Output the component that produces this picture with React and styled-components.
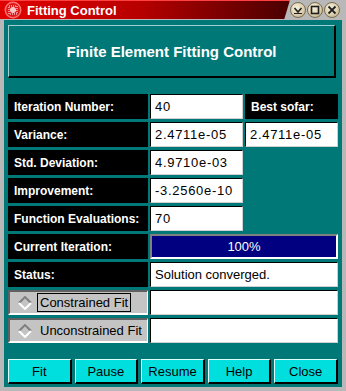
import React from 'react';
import styled, { createGlobalStyle } from 'styled-components';

const GlobalStyle = createGlobalStyle`
  html, body {
    margin: 0;
    padding: 0;
    background: #b8b8b8;
  }
  body {
    font-family: "Liberation Sans", Arial, sans-serif;
  }
`;

const Window = styled.div`
  width: 346px;
  height: 391px;
  display: flex;
  flex-direction: column;
  background: #b8b8b8;
  overflow: hidden;
`;

const TitleBar = styled.div`
  position: relative;
  height: 19px;
  flex: none;
  display: flex;
  align-items: center;
  background: linear-gradient(90deg, #e00000 0%, #b80000 40%, #600000 75%, #200000 100%);
  border-top: 1px solid #ff4040;
  box-sizing: border-box;
`;

const TitleText = styled.span`
  color: #fff;
  font-weight: bold;
  font-size: 13px;
  margin-left: 5px;
`;

const TitleIcon = styled.svg`
  margin-left: 4px;
  flex: none;
`;

const ControlArea = styled.div`
  position: absolute;
  right: 0;
  top: -1px;
  height: 20px;
  width: 62px;
  background: #b8b8b8;
  clip-path: polygon(6px 0, 100% 0, 100% 100%, 0 100%);
  display: flex;
  align-items: center;
  justify-content: flex-end;
  gap: 1px;
  padding-right: 6px;
  box-sizing: border-box;
`;

const CircleButton = styled.div`
  width: 16px;
  height: 16px;
  box-sizing: border-box;
  border-radius: 50%;
  border: 1px solid #7a6c50;
  background: radial-gradient(circle at 40% 35%, #f8f0dc 0%, #dccfae 55%, #b0a07c 100%);
  display: flex;
  align-items: center;
  justify-content: center;
`;

const Body = styled.div`
  flex: 1;
  margin: 1px 4px 4px 4px;
  background: #007878;
  padding: 5px 4px 3px 4px;
  display: flex;
  flex-direction: column;
`;

const Header = styled.div`
  height: 53px;
  margin-right: 2px;
  box-sizing: border-box;
  border-top: 1px solid #a0d0d0;
  border-left: 1px solid #a0d0d0;
  border-bottom: 2px solid #000;
  border-right: 2px solid #000;
  display: flex;
  align-items: center;
  justify-content: center;
  color: #fff;
  font-weight: bold;
  font-size: 15px;
`;

const Grid = styled.div`
  margin-top: 16px;
  display: grid;
  grid-template-columns: 140px 93px 93px;
  grid-auto-rows: 25px;
  column-gap: 2px;
  row-gap: 3px;
`;

const Label = styled.div`
  background: #000;
  color: #fff;
  font-weight: bold;
  font-size: 12px;
  display: flex;
  align-items: center;
  padding-left: 6px;
  grid-column: ${p => p.$col || 'auto'};
`;

const Entry = styled.div`
  background: #fff;
  color: #000;
  font-size: 13px;
  letter-spacing: ${p => (p.$num ? '0.7px' : '0')};
  display: flex;
  align-items: center;
  padding-left: 4px;
  box-sizing: border-box;
  border-top: 1px solid #000;
  border-left: 1px solid #000;
  border-bottom: 1px solid #d0d0d0;
  border-right: 1px solid #d0d0d0;
  grid-column: ${p => (p.$wide ? 'span 2' : 'auto')};
`;

const Progress = styled.div`
  grid-column: span 2;
  background: #000080;
  color: #fff;
  font-size: 13px;
  display: flex;
  align-items: center;
  justify-content: center;
  box-sizing: border-box;
  border-top: 2px solid #808080;
  border-left: 2px solid #808080;
  border-bottom: 2px solid #fff;
  border-right: 2px solid #fff;
`;

const RadioCell = styled.div`
  background: #c4c4c4;
  display: flex;
  align-items: center;
  gap: 5px;
  padding-left: 8px;
  box-sizing: border-box;
  white-space: nowrap;
  overflow: hidden;
  border-top: 2px solid #606060;
  border-left: 2px solid #606060;
  border-bottom: 2px solid #fff;
  border-right: 1px solid #fff;
`;

const RadioText = styled.span`
  font-size: 13px;
  color: #000;
  padding: 1px 2px;
  border: 1px solid ${p => (p.$focus ? '#000' : 'transparent')};
`;

const Buttons = styled.div`
  margin-top: 16px;
  display: grid;
  grid-template-columns: repeat(5, 1fr);
  column-gap: 3px;
  height: 25px;
`;

const Button = styled.button`
  background: #00dede;
  color: #000;
  font-family: "Liberation Sans", Arial, sans-serif;
  font-size: 13px;
  padding: 0;
  box-sizing: border-box;
  border-top: 1px solid #e0ffff;
  border-left: 1px solid #e0ffff;
  border-bottom: 2px solid #000;
  border-right: 2px solid #000;
`;

const Diamond = () => (
  <svg width="14" height="14" viewBox="0 0 14 14" style={{ flex: 'none' }}>
    <polygon points="7,1 13,7 7,13 1,7" fill="#c4c4c4" />
    <polyline points="1,7 7,1 13,7" fill="none" stroke="#808080" strokeWidth="2" />
    <polyline points="1,7 7,13 13,7" fill="none" stroke="#ffffff" strokeWidth="2" />
  </svg>
);

const rows = [
  ['Iteration Number:', '40'],
  ['Variance:', '2.4711e-05'],
  ['Std. Deviation:', '4.9710e-03'],
  ['Improvement:', '-3.2560e-10'],
  ['Function Evaluations:', '70'],
];

export default function App() {
  return (
    <Window>
      <GlobalStyle />
      <TitleBar>
        <TitleIcon width="18" height="18" viewBox="0 0 18 18">
          <circle cx="9" cy="9" r="8.5" fill="#ff7070" />
          <circle cx="9" cy="9" r="7" fill="#e01818" />
          <rect x="5" y="5" width="8" height="8" fill="none" stroke="#fff" strokeDasharray="1 1" />
          <path d="M7 7h4v4h-4z M9 6v6 M6 9h6" stroke="#fff" strokeWidth="1" fill="none" />
        </TitleIcon>
        <TitleText>Fitting Control</TitleText>
        <ControlArea>
          <CircleButton>
            <svg width="10" height="10" viewBox="0 0 10 10">
              <path d="M1.5 3 L5 7 L8.5 3" stroke="#202020" strokeWidth="1.6" fill="none" />
              <path d="M1 8.5h8" stroke="#202020" strokeWidth="1" />
            </svg>
          </CircleButton>
          <CircleButton>
            <svg width="10" height="10" viewBox="0 0 10 10">
              <rect x="1.5" y="1.5" width="7" height="7" stroke="#202020" strokeWidth="1.6" fill="none" />
            </svg>
          </CircleButton>
          <CircleButton>
            <svg width="10" height="10" viewBox="0 0 10 10">
              <path d="M1.5 1.5 L8.5 8.5 M8.5 1.5 L1.5 8.5" stroke="#202020" strokeWidth="1.8" />
            </svg>
          </CircleButton>
        </ControlArea>
      </TitleBar>
      <Body>
        <Header>Finite Element Fitting Control</Header>
        <Grid>
          <Label>{rows[0][0]}</Label>
          <Entry $num>{rows[0][1]}</Entry>
          <Label>Best sofar:</Label>
          <Label>{rows[1][0]}</Label>
          <Entry $num>{rows[1][1]}</Entry>
          <Entry $num>2.4711e-05</Entry>
          {rows.slice(2).map(([label, value]) => (
            <React.Fragment key={label}>
              <Label $col="1">{label}</Label>
              <Entry $num>{value}</Entry>
            </React.Fragment>
          ))}
          <Label $col="1">Current Iteration:</Label>
          <Progress>100%</Progress>
          <Label>Status:</Label>
          <Entry $wide>Solution converged.</Entry>
          <RadioCell>
            <Diamond />
            <RadioText $focus>Constrained Fit</RadioText>
          </RadioCell>
          <Entry $wide />
          <RadioCell>
            <Diamond />
            <RadioText>Unconstrained Fit</RadioText>
          </RadioCell>
          <Entry $wide />
        </Grid>
        <Buttons>
          <Button>Fit</Button>
          <Button>Pause</Button>
          <Button>Resume</Button>
          <Button>Help</Button>
          <Button>Close</Button>
        </Buttons>
      </Body>
    </Window>
  );
}
